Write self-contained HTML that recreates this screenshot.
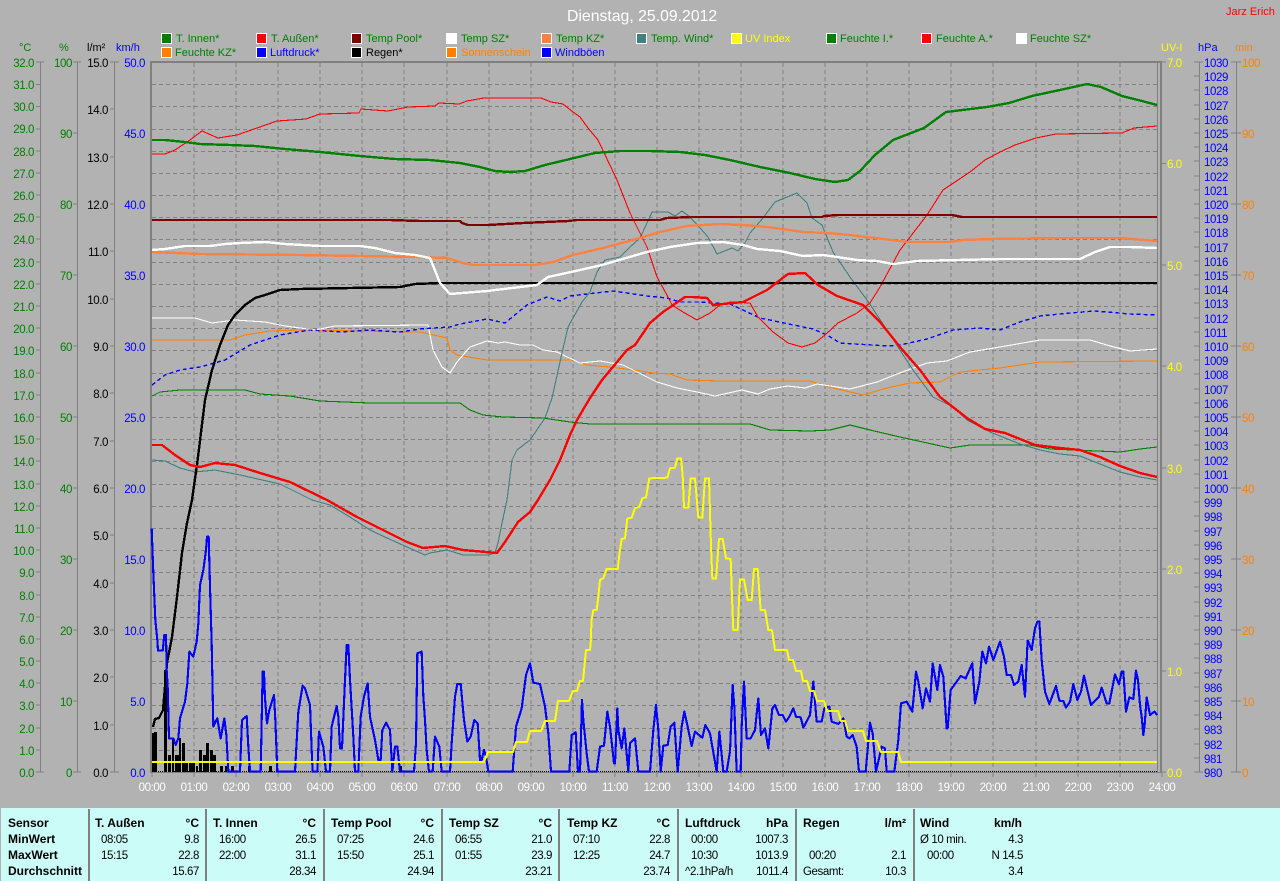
<!DOCTYPE html>
<html lang="de">
<head>
<meta charset="utf-8">
<title>Dienstag, 25.09.2012</title>
<style>
html,body{margin:0;padding:0;background:#b2b2b2;overflow:hidden}
svg{display:block}
text{font-family:"Liberation Sans",Arial,sans-serif;font-size:11.5px;letter-spacing:-.4px}
.l text,text.l{font-size:11px;letter-spacing:0}
.b text{font-weight:bold;font-size:12px;letter-spacing:0}
polyline,path,line,rect{shape-rendering:crispEdges}
polyline{fill:none;stroke-linejoin:round}
</style>
</head>
<body>
<svg xmlns="http://www.w3.org/2000/svg" width="1280" height="881" viewBox="0 0 1280 881">
<rect width="1280" height="881" fill="#b2b2b2"/>

<!-- title -->
<text x="567" y="21" fill="#fff" style="font-size:15.8px;letter-spacing:0">Dienstag, 25.09.2012</text>
<text x="1226" y="15" fill="#f00" class="l">Jarz Erich</text>

<!-- legend -->
<g stroke="#fff" stroke-width="1">
<rect x="161.5" y="33.5" width="10" height="10" fill="#008000"/>
<rect x="256.5" y="33.5" width="10" height="10" fill="#f00"/>
<rect x="351.5" y="33.5" width="10" height="10" fill="#800000"/>
<rect x="446.5" y="33.5" width="10" height="10" fill="#fff"/>
<rect x="541.5" y="33.5" width="10" height="10" fill="#ff8040"/>
<rect x="636.5" y="33.5" width="10" height="10" fill="#408080"/>
<rect x="731.5" y="33.5" width="10" height="10" fill="#ff0"/>
<rect x="826.5" y="33.5" width="10" height="10" fill="#008000"/>
<rect x="921.5" y="33.5" width="10" height="10" fill="#f00"/>
<rect x="1016.5" y="33.5" width="10" height="10" fill="#fff"/>
<rect x="161.5" y="47.5" width="10" height="10" fill="#ff8000"/>
<rect x="256.5" y="47.5" width="10" height="10" fill="#00f"/>
<rect x="351.5" y="47.5" width="10" height="10" fill="#000"/>
<rect x="446.5" y="47.5" width="10" height="10" fill="#ff8000"/>
<rect x="541.5" y="47.5" width="10" height="10" fill="#00f"/>
</g>
<g class="l" fill="#008000">
<text x="176" y="42">T. Innen*</text>
<text x="271" y="42">T. Außen*</text>
<text x="366" y="42">Temp Pool*</text>
<text x="461" y="42">Temp SZ*</text>
<text x="556" y="42">Temp KZ*</text>
<text x="651" y="42">Temp. Wind*</text>
<text x="745" y="42" fill="#ff0">UV Index</text>
<text x="840" y="42">Feuchte I.*</text>
<text x="936" y="42">Feuchte A.*</text>
<text x="1030" y="42">Feuchte SZ*</text>
<text x="175" y="56">Feuchte KZ*</text>
<text x="270" y="56" fill="#00f">Luftdruck*</text>
<text x="366" y="56" fill="#000">Regen*</text>
<text x="461" y="56" fill="#ff8000">Sonnenschein</text>
<text x="555" y="56" fill="#00f">Windböen</text>
</g>

<!-- axis headers -->
<g class="l">
<text x="19" y="51" fill="#008000">°C</text>
<text x="59" y="51" fill="#008000">%</text>
<text x="87" y="51" fill="#000">l/m²</text>
<text x="116" y="51" fill="#00f">km/h</text>
<text x="1161" y="51" fill="#ff0">UV-I</text>
<text x="1198" y="51" fill="#00f">hPa</text>
<text x="1235" y="51" fill="#ff8000">min</text>
</g>

<!-- axes -->
<g fill="none" stroke="#808080" stroke-width="1">
<path d="M40.5 62V772M77.5 62V772M114.5 62V772M1199.5 62V772M1236.5 62V772"/>
<path d="M36 62H44M73 62H81M110 62H119M1194 62H1203M1231 62H1241M36 772H44M73 772H81M110 772H119M1194 772H1203M1231 772H1241"/>
<path d="M36 84.5H41M36 106.5H41M36 129H41M36 151H41M36 173H41M36 195H41M36 217H41M36 239H41M36 262H41M36 284H41M36 306H41M36 328H41M36 350H41M36 373H41M36 395H41M36 417H41M36 439H41M36 461H41M36 484H41M36 506H41M36 528H41M36 550H41M36 572H41M36 595H41M36 617H41M36 639H41M36 661H41M36 683H41M36 705H41M36 728H41M36 750H41"/>
<path d="M73 133H78M73 204H78M73 275H78M73 346H78M73 417H78M73 488H78M73 559H78M73 630H78M73 701H78"/>
<path d="M110 109H115M110 157H115M110 204H115M110 251H115M110 299H115M110 346H115M110 393H115M110 441H115M110 488H115M110 535H115M110 583H115M110 630H115M110 677H115M110 725H115"/>
<path d="M1161 62H1166M1161 163.500H1166M1161 265H1166M1161 366H1166M1161 468H1166M1161 569H1166M1161 671H1166M1161 772H1166"/>
<path d="M1194 76H1200M1194 90H1200M1194 105H1200M1194 119H1200M1194 133H1200M1194 147H1200M1194 161H1200M1194 176H1200M1194 190H1200M1194 204H1200M1194 218H1200M1194 232H1200M1194 247H1200M1194 261H1200M1194 275H1200M1194 289H1200M1194 303H1200M1194 318H1200M1194 332H1200M1194 346H1200M1194 360H1200M1194 374H1200M1194 389H1200M1194 403H1200M1194 417H1200M1194 431H1200M1194 445H1200M1194 460H1200M1194 474H1200M1194 488H1200M1194 502H1200M1194 516H1200M1194 531H1200M1194 545H1200M1194 559H1200M1194 573H1200M1194 587H1200M1194 602H1200M1194 616H1200M1194 630H1200M1194 644H1200M1194 658H1200M1194 673H1200M1194 687H1200M1194 701H1200M1194 715H1200M1194 729H1200M1194 744H1200M1194 758H1200"/>
<path d="M1231 133H1241M1231 204H1241M1231 275H1241M1231 346H1241M1231 417H1241M1231 488H1241M1231 559H1241M1231 630H1241M1231 701H1241"/>
<path d="M194 773V777M236 773V777M278 773V777M320 773V777M362 773V777M404 773V777M447 773V777M489 773V777M531 773V777M573 773V777M615 773V777M657 773V777M699 773V777M741 773V777M783 773V777M825 773V777M867 773V777M909 773V777M951 773V777M993 773V777M1036 773V777M1078 773V777M1120 773V777M1162 773V777M152 773V777"/>
</g>

<!-- axis labels -->
<g fill="#008000" text-anchor="end">
<text x="34" y="67">32.0</text><text x="34" y="89">31.0</text><text x="34" y="111">30.0</text><text x="34" y="133">29.0</text><text x="34" y="156">28.0</text><text x="34" y="178">27.0</text><text x="34" y="200">26.0</text><text x="34" y="222">25.0</text><text x="34" y="244">24.0</text><text x="34" y="267">23.0</text><text x="34" y="289">22.0</text><text x="34" y="311">21.0</text><text x="34" y="333">20.0</text><text x="34" y="355">19.0</text><text x="34" y="378">18.0</text><text x="34" y="400">17.0</text><text x="34" y="422">16.0</text><text x="34" y="444">15.0</text><text x="34" y="466">14.0</text><text x="34" y="489">13.0</text><text x="34" y="511">12.0</text><text x="34" y="533">11.0</text><text x="34" y="555">10.0</text><text x="34" y="577">9.0</text><text x="34" y="600">8.0</text><text x="34" y="622">7.0</text><text x="34" y="644">6.0</text><text x="34" y="666">5.0</text><text x="34" y="688">4.0</text><text x="34" y="710">3.0</text><text x="34" y="733">2.0</text><text x="34" y="755">1.0</text><text x="34" y="777">0.0</text>
<text x="72" y="67">100</text><text x="72" y="138">90</text><text x="72" y="209">80</text><text x="72" y="280">70</text><text x="72" y="351">60</text><text x="72" y="422">50</text><text x="72" y="493">40</text><text x="72" y="564">30</text><text x="72" y="635">20</text><text x="72" y="706">10</text><text x="72" y="777">0</text>
</g>
<g fill="#000" text-anchor="end">
<text x="108" y="67">15.0</text><text x="108" y="114">14.0</text><text x="108" y="162">13.0</text><text x="108" y="209">12.0</text><text x="108" y="256">11.0</text><text x="108" y="304">10.0</text><text x="108" y="351">9.0</text><text x="108" y="398">8.0</text><text x="108" y="446">7.0</text><text x="108" y="493">6.0</text><text x="108" y="540">5.0</text><text x="108" y="588">4.0</text><text x="108" y="635">3.0</text><text x="108" y="682">2.0</text><text x="108" y="730">1.0</text><text x="108" y="777">0.0</text>
</g>
<g fill="#00f" text-anchor="end">
<text x="145" y="67">50.0</text><text x="145" y="138">45.0</text><text x="145" y="209">40.0</text><text x="145" y="280">35.0</text><text x="145" y="351">30.0</text><text x="145" y="422">25.0</text><text x="145" y="493">20.0</text><text x="145" y="564">15.0</text><text x="145" y="635">10.0</text><text x="145" y="706">5.0</text><text x="145" y="777">0.0</text>
</g>
<g fill="#ff0">
<text x="1167" y="67">7.0</text><text x="1167" y="168">6.0</text><text x="1167" y="270">5.0</text><text x="1167" y="371">4.0</text><text x="1167" y="473">3.0</text><text x="1167" y="574">2.0</text><text x="1167" y="676">1.0</text><text x="1167" y="777">0.0</text>
</g>
<g fill="#00f">
<text x="1204" y="67">1030</text><text x="1204" y="81">1029</text><text x="1204" y="95">1028</text><text x="1204" y="110">1027</text><text x="1204" y="124">1026</text><text x="1204" y="138">1025</text><text x="1204" y="152">1024</text><text x="1204" y="166">1023</text><text x="1204" y="181">1022</text><text x="1204" y="195">1021</text><text x="1204" y="209">1020</text><text x="1204" y="223">1019</text><text x="1204" y="237">1018</text><text x="1204" y="252">1017</text><text x="1204" y="266">1016</text><text x="1204" y="280">1015</text><text x="1204" y="294">1014</text><text x="1204" y="308">1013</text><text x="1204" y="323">1012</text><text x="1204" y="337">1011</text><text x="1204" y="351">1010</text><text x="1204" y="365">1009</text><text x="1204" y="379">1008</text><text x="1204" y="394">1007</text><text x="1204" y="408">1006</text><text x="1204" y="422">1005</text><text x="1204" y="436">1004</text><text x="1204" y="450">1003</text><text x="1204" y="465">1002</text><text x="1204" y="479">1001</text><text x="1204" y="493">1000</text><text x="1204" y="507">999</text><text x="1204" y="521">998</text><text x="1204" y="536">997</text><text x="1204" y="550">996</text><text x="1204" y="564">995</text><text x="1204" y="578">994</text><text x="1204" y="592">993</text><text x="1204" y="607">992</text><text x="1204" y="621">991</text><text x="1204" y="635">990</text><text x="1204" y="649">989</text><text x="1204" y="663">988</text><text x="1204" y="678">987</text><text x="1204" y="692">986</text><text x="1204" y="706">985</text><text x="1204" y="720">984</text><text x="1204" y="734">983</text><text x="1204" y="749">982</text><text x="1204" y="763">981</text><text x="1204" y="777">980</text>
</g>
<g fill="#ff8000">
<text x="1242" y="67">100</text><text x="1242" y="138">90</text><text x="1242" y="209">80</text><text x="1242" y="280">70</text><text x="1242" y="351">60</text><text x="1242" y="422">50</text><text x="1242" y="493">40</text><text x="1242" y="564">30</text><text x="1242" y="635">20</text><text x="1242" y="706">10</text><text x="1242" y="777">0</text>
</g>
<g fill="#fff" text-anchor="middle">
<text x="152" y="791">00:00</text><text x="194" y="791">01:00</text><text x="236" y="791">02:00</text><text x="278" y="791">03:00</text><text x="320" y="791">04:00</text><text x="362" y="791">05:00</text><text x="404" y="791">06:00</text><text x="447" y="791">07:00</text><text x="489" y="791">08:00</text><text x="531" y="791">09:00</text><text x="573" y="791">10:00</text><text x="615" y="791">11:00</text><text x="657" y="791">12:00</text><text x="699" y="791">13:00</text><text x="741" y="791">14:00</text><text x="783" y="791">15:00</text><text x="825" y="791">16:00</text><text x="867" y="791">17:00</text><text x="909" y="791">18:00</text><text x="951" y="791">19:00</text><text x="993" y="791">20:00</text><text x="1036" y="791">21:00</text><text x="1078" y="791">22:00</text><text x="1120" y="791">23:00</text><text x="1162" y="791">24:00</text>
</g>

<!-- grid -->
<g fill="none" stroke="#808080" stroke-width="1" stroke-dasharray="4 3">
<path d="M152 84.500H1158M152 106.500H1158M152 129.500H1158M152 151.500H1158M152 173.500H1158M152 195.500H1158M152 217.500H1158M152 239.500H1158M152 262.500H1158M152 284.500H1158M152 306.500H1158M152 328.500H1158M152 350.500H1158M152 373.500H1158M152 395.500H1158M152 417.500H1158M152 439.500H1158M152 461.500H1158M152 484.500H1158M152 506.500H1158M152 528.500H1158M152 550.500H1158M152 572.500H1158M152 595.500H1158M152 617.500H1158M152 639.500H1158M152 661.500H1158M152 683.500H1158M152 705.500H1158M152 728.500H1158M152 750.500H1158"/>
<path d="M194 63V772M236 63V772M278 63V772M320 63V772M362 63V772M404 63V772M447 63V772M489 63V772M531 63V772M573 63V772M615 63V772M657 63V772M699 63V772M741 63V772M783 63V772M825 63V772M867 63V772M909 63V772M951 63V772M993 63V772M1036 63V772M1078 63V772M1120 63V772"/>
</g>
<!-- frame -->
<rect x="150" y="61" width="1012" height="2" fill="#808080"/>
<rect x="150" y="61" width="2" height="712" fill="#808080"/>
<rect x="1160" y="61" width="2" height="712" fill="#808080"/>
<rect x="1157" y="62" width="1" height="710" fill="#808080"/>
<rect x="150" y="772" width="1012" height="1" fill="#808080"/>
<path d="M152 771.500H1158" stroke="#000" stroke-width="1" stroke-dasharray="1 1" fill="none"/>

<!-- rain bars -->
<path fill="#000" d="M152 733h2v39h-2zM154 732h3v40h-3zM164 670h3v102h-3zM168 755h3v17h-3zM172 738h2v34h-2zM175 755h4v17h-4zM179 738h2v34h-2zM182 743h3v29h-3zM185 763h3v9h-3zM189 762h6v10h-6zM196 766h2v6h-2zM199 750h3v22h-3zM203 755h3v17h-3zM206 743h3v29h-3zM210 750h3v22h-3zM213 755h3v17h-3zM220 766h3v6h-3zM225 766h2v6h-2zM231 766h3v6h-3zM248 766h3v6h-3zM269 766h3v6h-3zM399 766h3v6h-3z"/>

<!-- thin green -->
<polyline stroke="#008000" stroke-width="1.1" points="152,396 160,392 180,390 245,390 260,394 290,396 320,401 370,403 460,403 470,410 483,415 503,417 543,418 570,422 590,424 750,424 770,430 810,431 830,430 850,425 870,430 900,437 950,448 970,445 1030,445 1050,449 1120,452 1140,449 1157,447"/>
<!-- thin orange -->
<polyline stroke="#ff8000" stroke-width="1.1" points="152,340 230,340 245,335 270,331 300,330 420,332 447,338 450,350 457,355 487,360 573,360 587,365 610,367 633,370 653,373 670,374 687,380 720,381 810,381 833,388 863,395 887,388 910,383 940,382 960,372 1000,368 1040,362 1157,361"/>
<!-- thin white -->
<polyline stroke="#fff" stroke-width="1.1" points="152,318 195,318 212,323 235,320 265,322 285,326 315,330 335,326 428,325 433,350 442,367 450,373 457,362 470,347 487,341 498,343 505,342 520,345 533,345 543,350 557,352 580,363 600,361 623,365 643,375 657,382 677,388 697,392 715,396 742,390 758,394 770,389 788,386 805,388 817,384 850,389 877,382 897,374 927,363 947,361 970,352 1000,347 1040,340 1090,340 1110,346 1130,351 1157,349"/>
<!-- dashed blue -->
<polyline stroke="#00f" stroke-width="1.4" stroke-dasharray="4 3" points="152,385 165,375 180,370 200,367 225,360 250,345 280,335 310,330 340,332 370,330 400,332 420,329 450,327 460,324 487,319 505,323 527,305 547,297 560,301 570,296 613,291 647,296 667,298 680,302 700,302 730,304 760,318 813,329 827,335 840,343 887,346 900,345 927,339 953,330 980,328 1000,330 1020,322 1040,316 1070,313 1095,311 1130,314 1157,315"/>
<!-- teal wind -->
<polyline stroke="#408080" stroke-width="1.1" points="152,460 165,461 180,468 195,472 215,470 240,475 280,484 312,500 330,505 350,517 370,530 387,538 407,547 425,555 430,553 447,550 463,555 488,555 495,553 498,543 502,523 507,500 512,460 517,450 530,440 545,418 552,398 562,353 568,327 582,302 590,292 597,272 605,260 620,257 630,247 640,238 647,223 652,212 668,212 675,216 682,211 690,217 700,228 708,237 717,254 732,248 738,251 745,243 750,233 763,218 775,202 797,193 807,203 812,218 822,225 833,252 850,277 867,300 887,330 913,370 933,397 953,407 967,420 990,432 1020,444 1040,450 1060,454 1080,456 1100,464 1120,472 1140,477 1157,480"/>
<!-- thin red -->
<polyline stroke="#f00" stroke-width="1.1" points="152,154 165,154 175,150 190,140 202,131 218,138 237,135 257,128 277,121 306,119 320,114 359,113 361,109 388,111 408,107 435,106 439,103 459,104 467,101 484,98 541,98 551,102 563,104 573,112 580,117 588,128 598,140 617,180 630,213 647,247 657,277 668,297 672,305 683,312 697,320 710,313 720,305 730,302 750,303 758,317 773,332 788,343 802,347 815,343 825,335 838,323 857,313 870,303 880,287 900,250 927,215 943,190 958,180 970,172 985,160 1000,152 1015,145 1036,138 1056,134 1122,133 1134,128 1157,126"/>
<!-- black rain sum -->
<polyline stroke="#000" stroke-width="2.4" points="153,727 155,719 159,718 163,710 167,663 172,637 177,597 182,553 187,523 192,500 197,465 205,400 212,370 220,345 228,325 235,315 245,305 255,298 265,295 280,290 300,289 350,288 400,287 415,284 440,283 1157,283"/>
<!-- maroon -->
<polyline stroke="#800000" stroke-width="2.4" points="152,220 390,220 420,221 460,221 462,223 468,225 488,225 523,223 568,221 577,220 660,220 667,218 692,217 822,217 824,216 838,215 952,215 962,217 1157,217"/>
<!-- coral -->
<polyline stroke="#ff8040" stroke-width="2.4" points="152,252 200,254 300,255 420,257 447,258 463,263 473,265 535,265 553,262 573,255 603,248 633,240 660,232 687,226 720,224 743,225 767,227 803,232 827,233 850,235 883,239 907,242 950,242 963,240 993,239 1060,238 1120,238 1157,241"/>
<!-- white thick -->
<polyline stroke="#fff" stroke-width="2.4" points="152,250 165,249 185,246 210,246 225,244 240,243 265,242 285,244 320,246 360,246 375,248 395,253 415,255 430,258 440,283 450,294 487,291 537,285 548,277 580,270 602,265 633,256 647,252 670,247 697,243 723,242 743,245 757,249 780,251 803,256 823,255 837,257 857,260 877,261 893,264 917,261 1000,259 1080,259 1095,252 1110,247 1130,247 1157,248"/>
<!-- green thick -->
<polyline stroke="#008000" stroke-width="2.4" points="152,140 165,140 185,142 200,144 230,145 255,146 285,149 320,152 360,156 395,159 430,160 460,163 480,167 495,171 510,172 525,171 545,165 570,159 595,153 620,151 650,151 680,152 705,155 730,160 760,167 790,173 815,179 835,182 848,180 860,171 875,155 893,140 924,128 946,112 987,107 1009,103 1032,96 1060,90 1087,84 1101,87 1122,96 1142,101 1157,105"/>
<!-- T. Aussen thick red -->
<polyline stroke="#f00" stroke-width="2.4" points="152,445 162,445 175,455 190,465 200,467 215,463 235,465 260,473 290,482 327,500 357,517 387,532 407,542 423,548 445,546 463,550 497,553 505,542 518,522 530,512 538,500 550,480 560,460 570,435 577,420 590,398 602,380 627,350 635,345 650,323 663,312 685,297 693,297 707,298 713,305 743,302 767,290 788,274 805,273 818,285 837,296 863,305 880,322 900,347 920,370 940,397 967,418 985,429 1005,433 1035,445 1060,448 1080,450 1100,457 1120,466 1140,473 1157,477"/>

<!-- Windboeen: traced in 3x crop coordinates -->
<g fill="none" stroke="#00f" stroke-width="6.4" stroke-linejoin="round">
<polyline transform="translate(130,500) scale(.33333)" points="65,85 70,220 73,290 76,360 82,420 84,452 98,452 103,405 108,405 110,510 113,560 117,715 130,715 137,735 145,715 150,655 165,605 172,550 178,455 190,470 200,425 205,370 210,255 220,210 228,150 231,110 236,110 240,260 245,430 250,680 262,655 272,715 283,655 289,705 295,815 330,815 336,660 350,648 355,740 360,815 392,815 398,515 402,515 405,595 411,670 418,630 432,585 436,660 442,815 495,815 505,635 518,557 525,565 540,615 545,750 548,815 562,815 567,695 580,740 588,815 600,815 605,680 620,618 625,650 630,745 636,745 645,540 650,435 655,435 660,540 670,710 675,815 685,815 692,650 702,590 713,550 720,650 735,720 745,780 752,780 757,690 768,668 780,690 787,815 795,740 802,740 810,815 852,815 858,730 862,460 875,455 880,590 885,660 890,750 897,815 908,815"/>
<polyline transform="translate(430,500) scale(.33333)" points="8,815 15,710 28,740 35,815 60,815 65,730 75,590 82,552 92,552 102,660 112,725 122,710 133,660 143,670 150,780 155,780 162,750 168,770 175,815 248,815 258,680 275,625 288,525 300,490 310,548 330,552 345,620 355,700 363,815 418,815 425,705 437,697 444,815 450,815 456,600 460,660 470,760 477,815 500,815 510,740 522,737 532,635 540,680 552,790 555,790 562,625 565,690 575,745 583,685 595,815 600,730 615,715 625,815 660,815 670,690 678,615 685,690 692,815 700,737 713,735 722,680 733,668 743,815 755,680 763,635 773,680 785,738 795,695 817,713 826,675 840,700 860,815 868,695 880,815 890,815 900,755"/>
<polyline transform="translate(730,500) scale(.33333)" points="0,755 8,555 13,620 20,815 32,815 35,680 42,545 50,715 62,715 75,690 85,595 93,705 105,685 115,745 127,625 135,615 147,645 158,645 168,665 178,650 190,625 198,650 212,652 220,683 240,645 250,545 260,665 275,665 283,625 298,620 305,665 325,672 340,655 350,710 358,715 368,705 380,740 387,815 407,815 420,668 428,700 438,815 455,740 465,745 470,815 493,815 505,720 513,610 530,605 547,635 558,515 565,545 578,625 588,565 600,605 608,490 622,570 630,495 640,530 650,685 653,685 662,570 680,545 692,528 707,535 727,490 735,610 748,545 757,455 768,490 777,440 790,480 810,425 822,470 830,525 843,525 852,555 865,545 875,495 885,590 893,420"/>
<polyline transform="translate(1000,500) scale(.33333)" points="83,420 95,450 105,385 112,365 118,365 125,480 135,575 148,612 168,558 178,602 190,603 198,623 210,605 220,552 232,600 243,575 252,527 262,570 273,615 297,590 305,563 320,610 328,610 345,523 357,553 365,515 370,515 378,635 388,592 400,597 408,512 414,540 420,615 425,650 430,705 434,675 440,592 450,645 463,635 472,645"/>
</g>

<!-- UV yellow -->
<g fill="none" stroke="#ff0" stroke-linejoin="round">
<polyline stroke-width="2" points="152,762 484,762 488,752 513,752 516,742 527,742 530,731 541,731 545,721 555,721 558,701 569,701 573,691 577,691 580,681 583,681 586,650 590,650 591,640"/>
<polyline stroke-width="6" transform="translate(570,440) scale(.33333)" points="62,600 65,540 70,510 80,510 85,470 90,420 100,415 110,387 143,387 148,345 155,297 165,295 172,236 185,233 195,205 208,200 217,175 228,172 238,115 292,113 300,85 315,83 322,55 333,55 338,105 342,203 355,203 362,115 375,115 385,233 397,233 405,115 417,115 423,318 427,416 438,416 447,297 458,297 468,355 482,357 487,500 490,570 503,570 510,418 522,418 533,480 545,480 552,387 563,387 572,510 585,510 595,570 606,570"/>
<polyline stroke-width="2" points="772,630 775,650 787,650 789,660 793,660 796,671 801,671 803,681 807,681 810,691 814,691 817,701 824,701 827,711 838,711 841,721 845,721 848,731 863,731 866,741 877,741 881,752 898,752 901,762 1157,762"/>
</g>

<!-- stats panel -->
<rect x="1" y="808" width="1279" height="73" fill="#ccfcf8"/>
<path fill="#808080" d="M88 809h2v72h-2zM205 809h2v72h-2zM323 809h2v72h-2zM441 809h2v72h-2zM558 809h2v72h-2zM677 809h2v72h-2zM795 809h2v72h-2zM913 809h2v72h-2z"/>
<g class="b" fill="#000">
<text x="8" y="827">Sensor</text><text x="8" y="843">MinWert</text><text x="8" y="859">MaxWert</text><text x="8" y="875">Durchschnitt</text>
<text x="95" y="827">T. Außen</text><text x="199" y="827" text-anchor="end">°C</text>
<text x="213" y="827">T. Innen</text><text x="316" y="827" text-anchor="end">°C</text>
<text x="331" y="827">Temp Pool</text><text x="434" y="827" text-anchor="end">°C</text>
<text x="449" y="827">Temp SZ</text><text x="552" y="827" text-anchor="end">°C</text>
<text x="567" y="827">Temp KZ</text><text x="670" y="827" text-anchor="end">°C</text>
<text x="685" y="827">Luftdruck</text><text x="788" y="827" text-anchor="end">hPa</text>
<text x="803" y="827">Regen</text><text x="906" y="827" text-anchor="end">l/m²</text>
<text x="920" y="827">Wind</text><text x="1022" y="827" text-anchor="end">km/h</text>
</g>
<g fill="#000">
<text x="101" y="843">08:05</text><text x="101" y="859">15:15</text>
<text x="219" y="843">16:00</text><text x="219" y="859">22:00</text>
<text x="337" y="843">07:25</text><text x="337" y="859">15:50</text>
<text x="455" y="843">06:55</text><text x="455" y="859">01:55</text>
<text x="573" y="843">07:10</text><text x="573" y="859">12:25</text>
<text x="691" y="843">00:00</text><text x="691" y="859">10:30</text><text x="685" y="875">^2.1hPa/h</text>
<text x="809" y="859">00:20</text><text x="803" y="875">Gesamt:</text>
<text x="920" y="843">Ø 10 min.</text><text x="927" y="859">00:00</text>
</g>
<g fill="#000" text-anchor="end">
<text x="199" y="843">9.8</text><text x="199" y="859">22.8</text><text x="199" y="875">15.67</text>
<text x="316" y="843">26.5</text><text x="316" y="859">31.1</text><text x="316" y="875">28.34</text>
<text x="434" y="843">24.6</text><text x="434" y="859">25.1</text><text x="434" y="875">24.94</text>
<text x="552" y="843">21.0</text><text x="552" y="859">23.9</text><text x="552" y="875">23.21</text>
<text x="670" y="843">22.8</text><text x="670" y="859">24.7</text><text x="670" y="875">23.74</text>
<text x="788" y="843">1007.3</text><text x="788" y="859">1013.9</text><text x="788" y="875">1011.4</text>
<text x="906" y="859">2.1</text><text x="906" y="875">10.3</text>
<text x="1023" y="843">4.3</text><text x="1023" y="859">N 14.5</text><text x="1023" y="875">3.4</text>
</g>
</svg>
</body>
</html>
